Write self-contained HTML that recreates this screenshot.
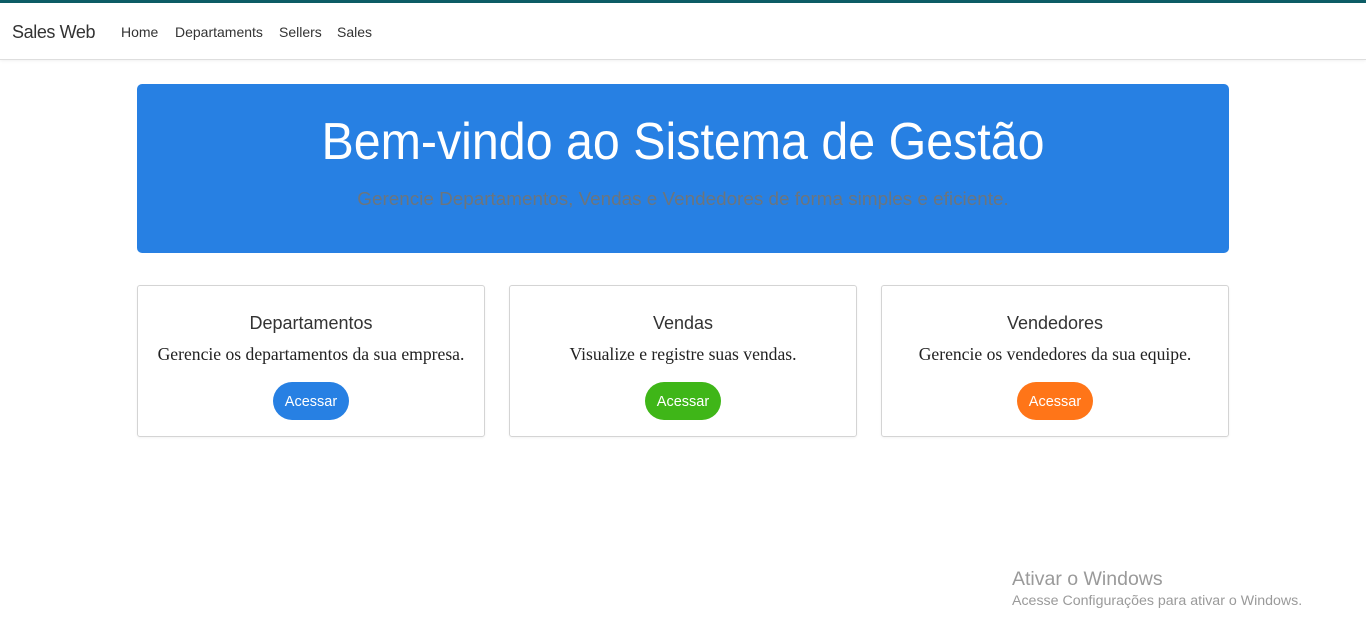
<!DOCTYPE html>
<html><head><meta charset="utf-8"><style>
body{margin:0;background:#fff;font-family:"Liberation Sans",sans-serif;width:1366px;height:644px;overflow:hidden;position:relative}
.top{height:3px;background:#0d5d66}
nav{height:56px;border-bottom:1px solid #dedede;box-shadow:0 1px 3px rgba(0,0,0,.06);position:relative}
.brand{position:absolute;left:12px;top:19px;font-size:18px;letter-spacing:-0.4px;color:#333}
.links a{position:absolute;top:21px;font-size:14px;color:#333;text-decoration:none}
.jumbo{position:absolute;left:137px;top:84px;width:1092px;height:169px;background:#2780e3;border-radius:5px;text-align:center}
.jumbo h1{margin:0;position:absolute;top:28px;left:0;right:0;font-weight:300;font-size:52px;color:#fff;transform:scaleX(.93)}
.jumbo p{margin:0;position:absolute;top:104px;left:0;right:0;font-size:18.5px;color:#6c757d;font-weight:300;transform:scaleX(1.02)}
.card{position:absolute;top:285px;width:346px;height:150px;border:1px solid #d4d4d4;border-radius:3px;text-align:center;box-shadow:0 1px 2px rgba(0,0,0,.05)}
.card h5{margin:0;position:absolute;top:27px;left:0;right:0;font-size:18px;font-weight:400;color:#333}
.card p{margin:0;position:absolute;top:58px;left:0;right:0;font-family:"Liberation Serif",serif;font-size:17.6px;color:#222}
.btn{position:absolute;top:96px;left:135px;width:76px;height:38px;border-radius:19px;color:#fff;font-size:14.5px;line-height:40px}
.win{position:absolute;left:1012px;color:#9a9a9a}
</style></head><body>
<div class="top"></div>
<nav><span class="brand">Sales Web</span>
<span class="links"><a style="left:121px">Home</a><a style="left:175px">Departaments</a><a style="left:279px">Sellers</a><a style="left:337px">Sales</a></span></nav>
<div class="jumbo"><h1>Bem-vindo ao Sistema de Gestão</h1><p>Gerencie Departamentos, Vendas e Vendedores de forma simples e eficiente.</p></div>
<div class="card" style="left:137px"><h5>Departamentos</h5><p>Gerencie os departamentos da sua empresa.</p><div class="btn" style="background:#2780e3">Acessar</div></div>
<div class="card" style="left:509px"><h5>Vendas</h5><p>Visualize e registre suas vendas.</p><div class="btn" style="background:#3fb618">Acessar</div></div>
<div class="card" style="left:881px"><h5>Vendedores</h5><p>Gerencie os vendedores da sua equipe.</p><div class="btn" style="background:#ff7518">Acessar</div></div>
<div class="win" style="top:568px;font-size:19.5px">Ativar o Windows</div>
<div class="win" style="top:593px;font-size:14.2px">Acesse Configurações para ativar o Windows.</div>
</body></html>
